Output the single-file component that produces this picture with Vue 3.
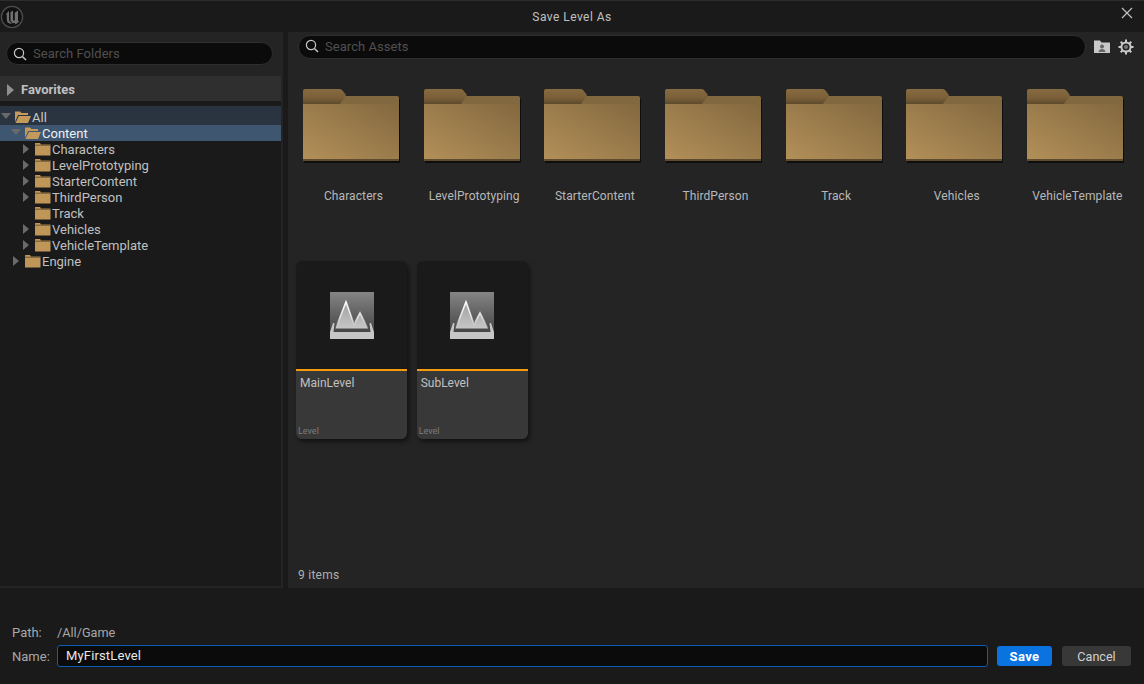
<template>
  <div class="dialog">
    <header class="title-bar">
      <svg class="logo" width="24" height="24" viewBox="0 0 24 24">
        <circle cx="12" cy="12" r="10.6" fill="#111111" stroke="#4c4c4c" stroke-width="1.3" />
        <path d="M5.5 9.5 L9 6 V15 Q9 16.6 10.5 17 L12 18.8 Q6.8 18.8 6.8 14.5 V9.2 Z" fill="#707070" />
        <path d="M10.5 7.2 L13 5.5 V15.2 L14 15.8 L14.8 15 V7.8 L18 5.5 V15.8 L19.2 16.4 L15.6 19.4 L14.6 17.8 L12.6 18.2 L10.5 15.8 Z" fill="#707070" />
      </svg>
      <span class="title">Save Level As</span>
      <svg class="close" width="12" height="12" viewBox="0 0 12 12">
        <path d="M1 1 L11 11 M11 1 L1 11" stroke="#c0c0c0" stroke-width="1.2" fill="none" />
      </svg>
    </header>

    <div class="main">
      <aside class="sidebar">
        <div class="sidebar-search">
          <div class="search-box">
            <svg class="search-icon" width="14" height="14" viewBox="0 0 14 14">
              <circle cx="6" cy="6" r="4.6" stroke="#c8c8c8" stroke-width="1.2" fill="none" />
              <path d="M9.4 9.4 L13 13" stroke="#c8c8c8" stroke-width="1.4" />
            </svg>
            <span class="placeholder">Search Folders</span>
          </div>
        </div>
        <div class="favorites">
          <span class="arrow right big"></span>
          <span>Favorites</span>
        </div>
        <div class="tree">
          <div
            v-for="node in tree"
            :key="node.name"
            class="tree-row"
            :class="{ selected: node.selected, parent: node.name === 'All' }"
            :style="{ paddingLeft: node.depth * 10 + 'px' }"
          >
            <span class="arrow" :class="node.arrow"></span>
            <svg v-if="node.open" class="tree-folder" width="17" height="14" viewBox="0 0 17 14">
              <path d="M1 1.5 H6 L7.5 3 H14 V5 H4 L1 12 Z" fill="#c49a5c" />
              <path d="M4.8 6 H17 L14 13 H1.5 Z" fill="#c49a5c" />
            </svg>
            <svg v-else class="tree-folder" width="17" height="14" viewBox="0 0 17 14">
              <path d="M1 1.5 Q1 1 1.5 1 H6 L7 2.5 H16.5 V13.5 H1 Z" fill="#c09658" />
              <path d="M1 3.2 H16.5" stroke="#1a1a1a" stroke-width="0.5" />
            </svg>
            <span class="tree-label">{{ node.name }}</span>
          </div>
        </div>
      </aside>

      <section class="assets">
        <div class="assets-top">
          <div class="search-box wide">
            <svg class="search-icon" width="14" height="14" viewBox="0 0 14 14">
              <circle cx="6" cy="6" r="4.6" stroke="#c8c8c8" stroke-width="1.2" fill="none" />
              <path d="M9.4 9.4 L13 13" stroke="#c8c8c8" stroke-width="1.4" />
            </svg>
            <span class="placeholder">Search Assets</span>
          </div>
          <svg class="tool" width="16" height="14" viewBox="0 0 16 14">
            <path d="M0 0.5 H6 L7.5 2.5 H16 V13 H0 Z" fill="#c8c8c8" />
            <circle cx="8" cy="6.5" r="2" fill="#666" />
            <path d="M4.5 12 Q5 9 8 9 Q11 9 11.5 12 Z" fill="#666" />
          </svg>
          <svg class="tool gear" width="16" height="16" viewBox="0 0 16 16">
            <circle cx="8" cy="8" r="4.6" fill="none" stroke="#c8c8c8" stroke-width="2" />
            <circle cx="8" cy="8" r="2" fill="#777" />
            <path
              d="M8 0.5 V3 M8 13 V15.5 M0.5 8 H3 M13 8 H15.5 M2.7 2.7 L4.5 4.5 M11.5 11.5 L13.3 13.3 M13.3 2.7 L11.5 4.5 M4.5 11.5 L2.7 13.3"
              stroke="#c8c8c8"
              stroke-width="2"
            />
          </svg>
        </div>

        <div class="grid">
          <div v-for="folder in folders" :key="folder" class="folder-tile">
            <svg width="98" height="75" viewBox="0 0 98 75">
              <defs>
                <linearGradient id="frontGrad" x1="0" y1="1" x2="1" y2="0">
                  <stop offset="0" stop-color="#b39059" />
                  <stop offset="1" stop-color="#83683f" />
                </linearGradient>
                <linearGradient id="tabGrad" x1="0" y1="0" x2="0" y2="1">
                  <stop offset="0" stop-color="#866a40" />
                  <stop offset="0.6" stop-color="#7a5f39" />
                  <stop offset="1" stop-color="#5d4a2c" />
                </linearGradient>
              </defs>
              <path d="M1 74 H97 V10 H1 Z" fill="#0e0e0e" />
              <path d="M36 15 L42 7 H94 Q96 7 96 9 V15 Z" fill="#82683f" />
              <path d="M0 2 Q0 0 2 0 H36 Q38 0 39 1 L43 6 L37 15 H0 Z" fill="url(#tabGrad)" />
              <path d="M0 15 H96 V71 H0 Z" fill="url(#frontGrad)" />
              <path d="M0 70 H96 V72 H0 Z" fill="#5f4c2e" />
            </svg>
            <span class="folder-name">{{ folder }}</span>
          </div>

          <div v-for="level in levels" :key="level" class="level-card">
            <div class="level-thumb">
              <svg width="44" height="47" viewBox="0 0 44 47">
                <defs>
                  <linearGradient id="skyGrad" x1="0" y1="0" x2="0" y2="1">
                    <stop offset="0" stop-color="#858585" />
                    <stop offset="1" stop-color="#3c3c3c" />
                  </linearGradient>
                  <linearGradient id="peakGrad" x1="0" y1="0" x2="0" y2="1">
                    <stop offset="0" stop-color="#a0a0a0" />
                    <stop offset="1" stop-color="#c6c6c6" />
                  </linearGradient>
                  <linearGradient id="snowGrad" x1="0" y1="10" x2="0" y2="36" gradientUnits="userSpaceOnUse">
                    <stop offset="0" stop-color="#ffffff" />
                    <stop offset="0.6" stop-color="#ffffff" stop-opacity="0.7" />
                    <stop offset="1" stop-color="#ffffff" stop-opacity="0.1" />
                  </linearGradient>
                </defs>
                <rect x="0" y="0" width="44" height="46" fill="url(#skyGrad)" />
                <path d="M5.5 36.5 L16 10 L24 32 L30 21 L38 36.5 Z" fill="url(#peakGrad)" />
                <path d="M5.5 36.5 L16 10 L24 32 L30 21 L38 36.5" fill="none" stroke="url(#snowGrad)" stroke-width="1.6" />
                <path d="M0 40 L3 31 L4.5 31 L3.5 40 H40.5 L39.5 31 L41 31 L44 40 V47 H0 Z" fill="#c6c6c6" />
              </svg>
            </div>
            <div class="level-info">
              <span class="level-name">{{ level }}</span>
              <span class="level-type">Level</span>
            </div>
          </div>
        </div>

        <div class="status">9 items</div>
      </section>
    </div>

    <footer class="footer">
      <div class="path-row">
        <span class="field-label">Path:</span>
        <span class="path-value">/All/Game</span>
      </div>
      <div class="name-row">
        <span class="field-label">Name:</span>
        <div class="name-input">MyFirstLevel</div>
        <button class="btn save">Save</button>
        <button class="btn cancel">Cancel</button>
      </div>
    </footer>
  </div>
</template>

<script setup>
const tree = [
  { name: 'All', depth: 0, arrow: 'down', open: true },
  { name: 'Content', depth: 1, arrow: 'down', open: true, selected: true },
  { name: 'Characters', depth: 2, arrow: 'right' },
  { name: 'LevelPrototyping', depth: 2, arrow: 'right' },
  { name: 'StarterContent', depth: 2, arrow: 'right' },
  { name: 'ThirdPerson', depth: 2, arrow: 'right' },
  { name: 'Track', depth: 2, arrow: 'none' },
  { name: 'Vehicles', depth: 2, arrow: 'right' },
  { name: 'VehicleTemplate', depth: 2, arrow: 'right' },
  { name: 'Engine', depth: 1, arrow: 'right' }
]

const folders = [
  'Characters',
  'LevelPrototyping',
  'StarterContent',
  'ThirdPerson',
  'Track',
  'Vehicles',
  'VehicleTemplate'
]

const levels = ['MainLevel', 'SubLevel']
</script>

<style>
html, body {
  margin: 0;
  background: #1a1a1a;
}
</style>

<style scoped>
.dialog {
  width: 1144px;
  height: 684px;
  display: flex;
  flex-direction: column;
  overflow: hidden;
  background: #1a1a1a;
  font-family: Roboto, "Liberation Sans", sans-serif;
  font-size: 13px;
  color: #c0c0c0;
}

.title-bar {
  position: relative;
  height: 32px;
  flex: none;
  box-sizing: border-box;
  border-top: 1px solid #2c2c2c;
  display: flex;
  align-items: center;
  justify-content: center;
}

.logo {
  position: absolute;
  left: 0;
  top: 4px;
}

.close {
  position: absolute;
  right: 11px;
  top: 6px;
}

.title {
  font-size: 12px;
  letter-spacing: 0.45px;
  color: #c0c0c0;
}

.main {
  flex: 1;
  display: flex;
  min-height: 0;
}

.sidebar {
  width: 283px;
  flex: none;
  background: #1a1a1a;
  border-right: 2px solid #242424;
  border-bottom: 2px solid #242424;
  box-sizing: border-box;
  display: flex;
  flex-direction: column;
}

.sidebar-search {
  height: 44px;
  background: #242424;
  padding-top: 10px;
  padding-left: 6px;
  box-sizing: border-box;
  flex: none;
}

.search-box {
  width: 267px;
  height: 23px;
  box-sizing: border-box;
  border: 1px solid #2f2f2f;
  border-radius: 12px;
  background: #0b0b0b;
  display: flex;
  align-items: center;
  padding-left: 6px;
}

.search-box.wide {
  width: 788px;
  height: 24px;
  padding-bottom: 2px;
  flex: none;
}

.search-icon {
  margin-right: 6px;
  flex: none;
}

.placeholder {
  color: #505050;
  font-size: 13px;
  letter-spacing: 0.05px;
}

.favorites {
  height: 25px;
  box-sizing: border-box;
  padding-top: 2px;
  background: #2f2f2f;
  display: flex;
  align-items: center;
  padding-left: 7px;
  gap: 7px;
  font-weight: 700;
  font-size: 13px;
  color: #c0c0c0;
  flex: none;
}

.tree {
  margin-top: 5px;
  flex: 1;
}

.tree-row {
  height: 16px;
  display: flex;
  align-items: center;
}

.tree-row.parent {
  padding-top: 3px;
  background: #2a3440;
  color: #c8c8c8;
}

.tree-row.selected {
  background: #3f5670;
  color: #f0f0f0;
}

.arrow {
  width: 12px;
  height: 16px;
  flex: none;
  position: relative;
  margin-left: 1px;
}

.arrow.right::before {
  content: '';
  position: absolute;
  left: 2px;
  top: 3px;
  border-left: 6px solid #6a6a6a;
  border-top: 5px solid transparent;
  border-bottom: 5px solid transparent;
}

.arrow.down::before {
  content: '';
  position: absolute;
  left: 0;
  top: 4px;
  border-top: 6px solid #6a6a6a;
  border-left: 5px solid transparent;
  border-right: 5px solid transparent;
}

.arrow.big {
  width: 7px;
  margin-left: 0;
}

.arrow.big.right::before {
  left: 0;
  top: 2px;
  border-left-color: #909090;
  border-left-width: 7px;
  border-top-width: 6px;
  border-bottom-width: 6px;
}

.tree-folder {
  margin-left: 1px;
  margin-right: 1px;
  flex: none;
}

.tree-label {
  font-size: 13px;
  line-height: 16px;
  padding-top: 2px;
}

.assets {
  flex: 1;
  margin-left: 5px;
  background: #242424;
  display: flex;
  flex-direction: column;
  position: relative;
  min-width: 0;
}

.assets-top {
  display: flex;
  align-items: center;
  padding: 3px 0 0 10px;
  height: 24px;
  flex: none;
}

.tool {
  flex: none;
  margin-left: 8px;
}

.grid {
  margin: 16px 0 0 8px;
  display: grid;
  grid-template-columns: repeat(7, 111px);
  grid-auto-rows: 178px;
  column-gap: 9.67px;
  row-gap: 8px;
  flex: 1;
}

.folder-tile {
  display: flex;
  flex-direction: column;
  padding: 14px 0 0 7px;
  box-sizing: border-box;
}

.folder-name {
  margin-left: -7px;
  margin-top: 25px;
  width: 115px;
  text-align: center;
  font-size: 12px;
  line-height: 14px;
  white-space: nowrap;
  color: #b8b8b8;
  letter-spacing: 0.1px;
}

.level-card {
  display: flex;
  flex-direction: column;
  border-radius: 6px;
  overflow: hidden;
  box-shadow: 2px 3px 4px rgba(0, 0, 0, 0.5);
}

.level-thumb {
  height: 110px;
  background: #1a1a1a;
  border-bottom: 2px solid #f59a0c;
  display: flex;
  justify-content: center;
  align-items: flex-start;
  padding-top: 31px;
  box-sizing: border-box;
  flex: none;
}

.level-info {
  flex: 1;
  background: #383838;
  position: relative;
  padding: 4px 4px;
}

.level-name {
  font-size: 12px;
  line-height: 16px;
  color: #c0c0c0;
  display: block;
}

.level-type {
  position: absolute;
  left: 2px;
  bottom: 3px;
  font-size: 9px;
  color: #7d7d7d;
}

.status {
  position: absolute;
  left: 10px;
  bottom: 6px;
  font-size: 12px;
  letter-spacing: 0.25px;
  color: #b0b0b0;
}

.footer {
  height: 96px;
  flex: none;
  background: #1a1a1a;
  padding: 35px 13px 0 12px;
  box-sizing: border-box;
  display: flex;
  flex-direction: column;
}

.path-row {
  height: 19px;
  display: flex;
  align-items: center;
}

.field-label {
  width: 45px;
  flex: none;
  font-size: 13px;
  color: #a8a8a8;
}

.path-value {
  font-size: 12.7px;
  color: #a8a8a8;
}

.name-row {
  margin-top: 3px;
  display: flex;
  align-items: center;
  height: 22px;
}

.name-input {
  width: 931px;
  height: 22px;
  box-sizing: border-box;
  border: 1px solid #0b5cb5;
  border-radius: 3px;
  background: #0b0b0b;
  color: #e8e8e8;
  font-size: 13px;
  letter-spacing: 0.15px;
  line-height: 20px;
  padding-left: 8px;
  flex: none;
}

.btn {
  height: 20px;
  border: none;
  border-radius: 3px;
  font-family: inherit;
  font-size: 12.6px;
  padding: 0;
  flex: none;
}

.save {
  margin-left: 9px;
  width: 55px;
  background: #0a73e0;
  color: #ffffff;
  font-weight: 700;
  font-size: 13px;
  letter-spacing: 0.4px;
}

.cancel {
  margin-left: 10px;
  width: 69px;
  background: #383838;
  color: #d0d0d0;
}
</style>
